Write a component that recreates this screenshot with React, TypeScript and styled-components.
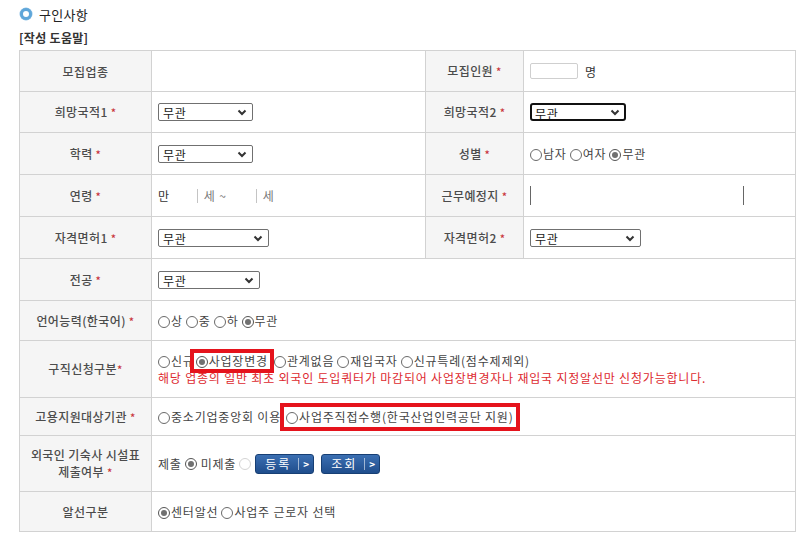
import React from "react";
import styled, { createGlobalStyle, css } from "styled-components";

const Global = createGlobalStyle`
  html, body { margin: 0; padding: 0; background: #fff; }
  body {
    font-family: "Noto Sans CJK KR", "Noto Sans", sans-serif;
    font-size: 12px;
    letter-spacing: 0.8px;
    color: #333;
  }
  * { box-sizing: border-box; }
`;

const Page = styled.div`
  padding: 0 13px 0 19px;
  width: 808px;
`;

const Title = styled.div`
  height: 28px;
  display: flex;
  align-items: center;
  gap: 7px;
  padding-left: 1px;
  font-size: 13px;
  letter-spacing: 0.3px;
  color: #222;
`;

const Bullet = styled.span`
  width: 12px;
  height: 12px;
  border-radius: 50%;
  border: 3.5px solid #5fa6d9;
  background: #fff;
  box-shadow: 0 0 0 0.5px #8cc0e6;
`;

const Help = styled.div`
  height: 20px;
  line-height: 20px;
  margin-bottom: 2px;
  font-weight: 700;
  font-size: 12px;
  letter-spacing: 0.3px;
  color: #333;
`;

const Grid = styled.div`
  display: grid;
  width: 777px;
  grid-template-columns: 132px 274px 98px 272px;
  grid-template-rows: 41px 41px 42px 42px 42px 42px 40px 57px 38px 56px 40px;
  border-top: 1px solid #d2d2d2;
  border-left: 1px solid #d2d2d2;
`;

const cellBase = css`
  border-right: 1px solid #d2d2d2;
  border-bottom: 1px solid #d2d2d2;
  display: flex;
  align-items: center;
`;

const LabelCell = styled.div`
  ${cellBase};
  background: #f5f5f5;
  justify-content: center;
  padding: 0 4px;
`;

const LabelText = styled.span`
  text-align: center;
  color: #4c4c4c;
  font-weight: 500;
  line-height: 17px;
  letter-spacing: 0.4px;
`;

function Label({ children }: { children: React.ReactNode }) {
  return (
    <LabelCell>
      <LabelText>{children}</LabelText>
    </LabelCell>
  );
}

const Value = styled.div<{ $span?: number; $column?: boolean }>`
  ${cellBase};
  grid-column: span ${(p) => p.$span ?? 1};
  padding: 0 6px;
  white-space: nowrap;
  color: #333;
  ${(p) =>
    p.$column &&
    css`
      flex-direction: column;
      align-items: flex-start;
      justify-content: center;
      line-height: 17px;
    `}
`;

const Star = styled.span`
  color: #c8343a;
  font-size: 11px;
  margin-left: 3px;
`;

const StarTight = styled(Star)`
  margin-left: 0;
`;

const SelectWrap = styled.span<{ $w: number }>`
  position: relative;
  display: inline-block;
  width: ${(p) => p.$w}px;
  height: 18px;
`;

const Select = styled.select<{ $focus?: boolean }>`
  appearance: none;
  -webkit-appearance: none;
  width: 100%;
  height: 100%;
  margin: 0;
  padding: 0 0 0 4px;
  font-family: inherit;
  font-size: 12px;
  letter-spacing: 0.7px;
  color: #222;
  background: #fff;
  border: 1px solid #707070;
  border-radius: 2px;
  outline: none;
  ${(p) =>
    p.$focus &&
    css`
      border: 2px solid #111;
      border-radius: 3px;
      padding-left: 3px;
    `}
`;

const Chevron = styled.svg`
  position: absolute;
  right: 6px;
  top: 6px;
  pointer-events: none;
`;

function Dropdown({ w, focus }: { w: number; focus?: boolean }) {
  return (
    <SelectWrap $w={w}>
      <Select $focus={focus} defaultValue="무관">
        <option>무관</option>
      </Select>
      <Chevron width="10" height="7" viewBox="0 0 10 7">
        <path d="M1.5 1.5 L5 5 L8.5 1.5" fill="none" stroke="#333" strokeWidth="2" />
      </Chevron>
    </SelectWrap>
  );
}

const RadioMark = styled.span<{ $checked?: boolean; $faint?: boolean }>`
  position: relative;
  display: inline-block;
  width: 12px;
  height: 12px;
  border-radius: 50%;
  border: 1px solid ${(p) => (p.$faint ? "#d4d4d4" : "#6a6a6a")};
  background: #fff;
  vertical-align: -2px;
  margin-right: 1px;
  ${(p) =>
    p.$checked &&
    css`
      border-color: #555;
      &::after {
        content: "";
        position: absolute;
        inset: 2px;
        border-radius: 50%;
        background: #707070;
      }
    `}
`;

const Option = styled.span`
  margin-right: 3px;
  color: #444;
`;

const Boxed = styled.span<{ $pad: number; $shift?: number }>`
  display: inline-block;
  outline: 4px solid #e5131c;
  padding: ${(p) => p.$pad}px 2px;
  margin-left: ${(p) => p.$shift ?? 0}px;
  line-height: 16px;
  color: #444;
  background: #fff;
`;

const Notice = styled.div`
  color: #dd2a2f;
`;

const SmallInput = styled.input`
  width: 48px;
  height: 16px;
  border: 1px solid #cfcfcf;
  border-radius: 2px;
  margin: 0 7px 0 0;
  padding: 0;
`;

const AgeInput = styled.input`
  width: 27px;
  height: 14px;
  border: none;
  border-right: 1px solid #c4c4c4;
  margin: 0 6px 0 0;
  padding: 0;
  background: transparent;
`;

const PlaceInput = styled.input`
  width: 214px;
  height: 19px;
  border: none;
  border-left: 1px solid #666;
  border-right: 1px solid #666;
  margin: 0;
  padding: 0;
`;

const Muted = styled.span`
  color: #777;
`;

const BtnRow = styled.span`
  display: inline-flex;
  gap: 7px;
  margin-left: 3px;
`;

const BlueButton = styled.button`
  display: inline-flex;
  align-items: stretch;
  width: 59px;
  height: 20px;
  padding: 0;
  border: 1px solid #173f74;
  border-radius: 3px;
  background: linear-gradient(#3b6fb2, #1f4d8c);
  color: #fff;
  font-family: inherit;
  font-size: 12px;
  cursor: pointer;
`;

const BtnText = styled.span`
  flex: 1;
  display: flex;
  align-items: center;
  justify-content: center;
  letter-spacing: 2px;
  padding-left: 2px;
`;

const BtnArrow = styled.span`
  width: 15px;
  display: flex;
  align-items: center;
  justify-content: center;
  border-left: 1px solid rgba(255, 255, 255, 0.55);
  margin: 3px 0;
  font-size: 10px;
  font-weight: 700;
  letter-spacing: 0;
`;

const Gap = styled.span<{ $w: number }>`
  display: inline-block;
  width: ${(p) => p.$w}px;
`;

export default function App() {
  return (
    <>
      <Global />
      <Page>
        <Title>
          <Bullet />
          구인사항
        </Title>
        <Help>[작성 도움말]</Help>
        <Grid>
          <Label>모집업종</Label>
          <Value />
          <Label>
            모집인원<Star>*</Star>
          </Label>
          <Value>
            <SmallInput /> 명
          </Value>

          <Label>
            희망국적1<Star>*</Star>
          </Label>
          <Value>
            <Dropdown w={95} />
          </Value>
          <Label>
            희망국적2<Star>*</Star>
          </Label>
          <Value>
            <Dropdown w={96} focus />
          </Value>

          <Label>
            학력<Star>*</Star>
          </Label>
          <Value>
            <Dropdown w={95} />
          </Value>
          <Label>
            성별<Star>*</Star>
          </Label>
          <Value>
            <Option>
              <RadioMark />남자
            </Option>
            <Option>
              <RadioMark />여자
            </Option>
            <Option>
              <RadioMark $checked />무관
            </Option>
          </Value>

          <Label>
            연령<Star>*</Star>
          </Label>
          <Value>
            만<Gap $w={1} />
            <AgeInput />
            <Muted>세 ~</Muted>
            <Gap $w={3} />
            <AgeInput />
            <Muted>세</Muted>
          </Value>
          <Label>
            근무예정지<Star>*</Star>
          </Label>
          <Value>
            <PlaceInput />
          </Value>

          <Label>
            자격면허1<Star>*</Star>
          </Label>
          <Value>
            <Dropdown w={111} />
          </Value>
          <Label>
            자격면허2<Star>*</Star>
          </Label>
          <Value>
            <Dropdown w={111} />
          </Value>

          <Label>
            전공<Star>*</Star>
          </Label>
          <Value $span={3}>
            <Dropdown w={102} />
          </Value>

          <Label>
            언어능력(한국어)<Star>*</Star>
          </Label>
          <Value $span={3}>
            <Option>
              <RadioMark />상
            </Option>
            <Option>
              <RadioMark />중
            </Option>
            <Option>
              <RadioMark />하
            </Option>
            <Option>
              <RadioMark $checked />무관
            </Option>
          </Value>

          <Label>
            구직신청구분<StarTight>*</StarTight>
          </Label>
          <Value $span={3} $column>
            <div>
              <Option>
                <RadioMark />신규
              </Option>
              <Boxed $pad={0} $shift={-4}>
                <RadioMark $checked />사업장변경
              </Boxed>
              <Gap $w={4} />
              <Option>
                <RadioMark />관계없음
              </Option>
              <Option>
                <RadioMark />재입국자
              </Option>
              <Option>
                <RadioMark />신규특례(점수제제외)
              </Option>
            </div>
            <Notice>
              해당 업종의 일반 최초 외국인 도입쿼터가 마감되어 사업장변경자나 재입국 지정알선만 신청가능합니다.
            </Notice>
          </Value>

          <Label>
            고용지원대상기관<Star>*</Star>
          </Label>
          <Value $span={3}>
            <Option>
              <RadioMark />중소기업중앙회 이용
            </Option>
            <Boxed $pad={2}>
              <RadioMark />사업주직접수행(한국산업인력공단 지원)
            </Boxed>
          </Value>

          <Label>
            외국인 기숙사 시설표
            <br />
            제출여부<Star>*</Star>
          </Label>
          <Value $span={3}>
            <Option>제출</Option>
            <RadioMark $checked />
            <Gap $w={3} />
            <Option>미제출</Option>
            <RadioMark $faint />
            <BtnRow>
              <BlueButton type="button">
                <BtnText>등록</BtnText>
                <BtnArrow>&gt;</BtnArrow>
              </BlueButton>
              <BlueButton type="button">
                <BtnText>조회</BtnText>
                <BtnArrow>&gt;</BtnArrow>
              </BlueButton>
            </BtnRow>
          </Value>

          <Label>알선구분</Label>
          <Value $span={3}>
            <Option>
              <RadioMark $checked />센터알선
            </Option>
            <Option>
              <RadioMark />사업주 근로자 선택
            </Option>
          </Value>
        </Grid>
      </Page>
    </>
  );
}
